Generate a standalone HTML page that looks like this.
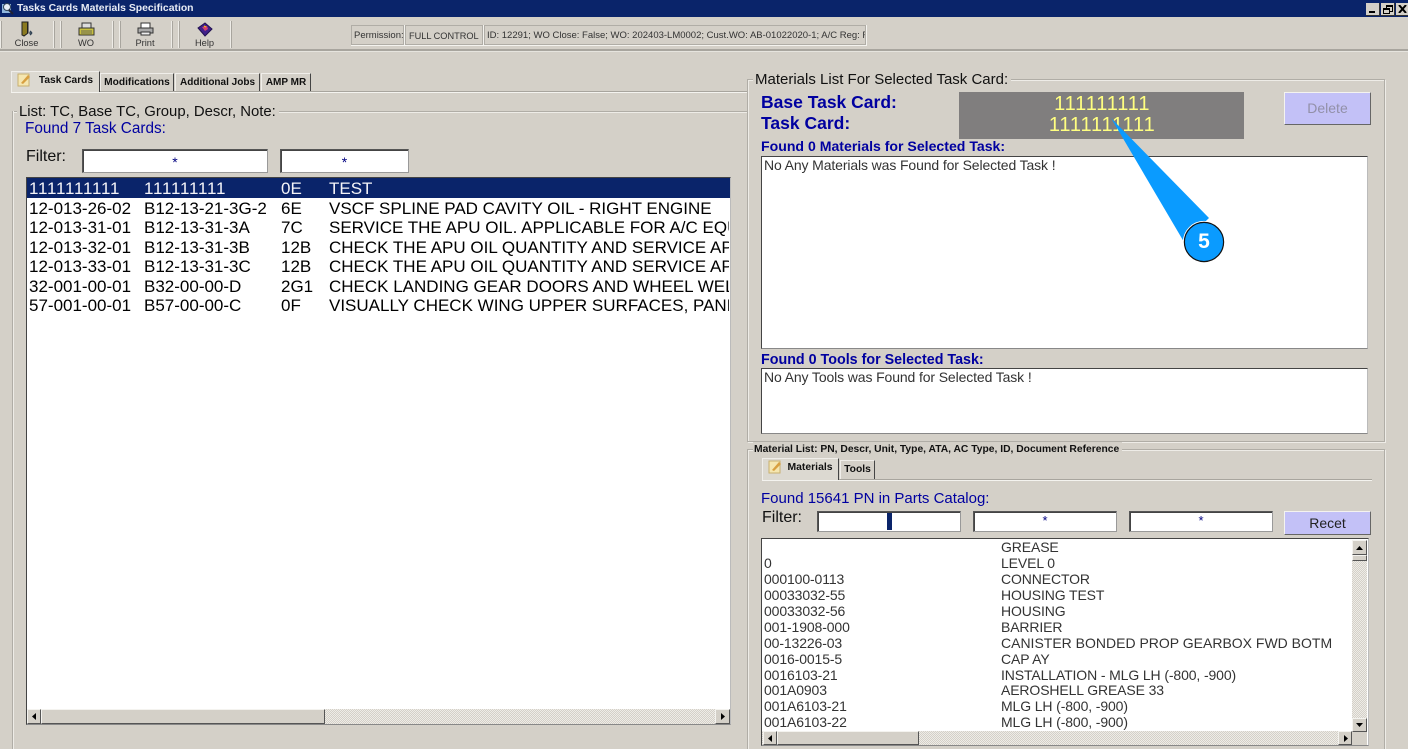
<!DOCTYPE html>
<html><head><meta charset="utf-8"><style>
html{margin:0;padding:0;width:1408px;height:749px;overflow:hidden}
body{margin:0;padding:0;width:1408px;height:749px;overflow:hidden;background:#d4d0c8;position:relative;font-family:"Liberation Sans",sans-serif;color:#000}
.a,.t,.c{position:absolute}
.t{white-space:pre;line-height:16px}
.c{white-space:pre;line-height:16px;text-align:center}
.gb{position:absolute;border:1px solid #b0ada6;box-shadow:1px 1px 0 #eeece7,inset 1px 1px 0 #eeece7}
.inp{position:absolute;background:#fff;border:1px solid #555;border-right-color:#999;border-bottom-color:#999;box-shadow:inset 1px 1px 0 #444;box-sizing:border-box;text-align:center;color:#000080;font-size:14px;line-height:25px}
.box{position:absolute;background:#fff;border:1px solid #444;border-right-color:#bbb;border-bottom-color:#888;box-sizing:border-box;overflow:hidden}
.sep{position:absolute;top:21px;width:1px;height:27px;background:#eeece7;border-right:1px solid #a8a59e}
.tab{position:absolute;border:1px solid #f0eeea;border-right:1px solid #444;border-bottom:none;box-sizing:border-box;font-weight:bold;font-size:10.5px;color:#111;text-align:center;white-space:pre}
.sb{position:absolute;background:#d4d0c8;border:1px solid #f4f3ef;border-right-color:#555;border-bottom-color:#555;box-sizing:border-box}
.dith{position:absolute;background-color:#eeece7;background-image:linear-gradient(45deg,#d4d0c8 25%,transparent 25%,transparent 75%,#d4d0c8 75%),linear-gradient(45deg,#d4d0c8 25%,transparent 25%,transparent 75%,#d4d0c8 75%);background-size:2px 2px;background-position:0 0,1px 1px}
.btn{position:absolute;background:#c3c1f7;border:1px solid #f4f3ef;border-right-color:#666;border-bottom-color:#666;box-sizing:border-box;text-align:center}
.r{font-size:17px;color:#000;line-height:20px}
.o{font-kerning:none;letter-spacing:-.45px}
.m{font-size:14px;color:#333;line-height:16px;letter-spacing:-.12px}
.st{position:absolute;top:25px;height:20px;background:#d4d0c8;border:1px solid #b0ada6;box-sizing:border-box;font-size:9.5px;line-height:20px;color:#333}
</style></head><body>

<!-- title bar -->
<div class="a" style="left:0;top:0;width:1408px;height:17px;background:#0a246a"></div>
<svg class="a" style="left:1px;top:1px" width="14" height="14" viewBox="0 0 14 14"><rect x="1" y="3" width="9" height="9" fill="#8fb6dd"/><circle cx="6" cy="6" r="3.5" fill="#e8eef5" stroke="#345" /><path d="M8 9l4 4" stroke="#223" stroke-width="2"/></svg>
<div class="t" style="left:17px;top:1px;color:#e8ecf5;font-size:10.4px;font-weight:bold">Tasks Cards Materials Specification</div>
<div class="a" style="left:1366px;top:3px;width:13px;height:12px;background:#d4d0c8;border-right:1px solid #333;border-bottom:1px solid #333"><div class="a" style="left:3px;bottom:2px;width:6px;height:2px;background:#000"></div></div>
<div class="a" style="left:1381px;top:3px;width:13px;height:12px;background:#d4d0c8;border-right:1px solid #333;border-bottom:1px solid #333"><div class="a" style="left:5px;top:2px;width:5px;height:4px;border:1px solid #000;border-top-width:2px"></div><div class="a" style="left:2px;top:5px;width:5px;height:3px;border:1px solid #000;border-top-width:2px;background:#d4d0c8"></div></div>
<div class="a" style="left:1396px;top:3px;width:12px;height:12px;background:#d4d0c8;border-bottom:1px solid #333"><svg class="a" style="left:2px;top:2px" width="9" height="8"><path d="M1 0l7 8M8 0l-7 8" stroke="#000" stroke-width="2"/></svg></div>

<!-- toolbar -->
<div class="a" style="left:0;top:17px;width:1408px;height:32px;border-bottom:2px solid #a8a59e;box-shadow:0 1px 0 #e6e4de"></div>
<div class="sep" style="left:0"></div><div class="sep" style="left:53px"></div><div class="sep" style="left:60px"></div>
<div class="sep" style="left:112px"></div><div class="sep" style="left:119px"></div><div class="sep" style="left:171px"></div><div class="sep" style="left:178px"></div><div class="sep" style="left:230px"></div>
<svg class="a" style="left:20px;top:21px" width="14" height="16" viewBox="0 0 14 16"><path d="M2 1h6v11l-4 3-2-1z" fill="#8a7a20" stroke="#222"/><path d="M7 1h1v11H7z" fill="#222"/><path d="M9 12h3M12 12l-2-2M12 12l-2 2" stroke="#345" stroke-width="1.3" fill="none"/></svg>
<svg class="a" style="left:78px;top:22px" width="17" height="14" viewBox="0 0 17 14"><rect x="4" y="1" width="9" height="6" fill="#ddd" stroke="#333"/><rect x="1" y="6" width="15" height="7" fill="#c8c040" stroke="#333"/><path d="M3 9h11M3 11h11" stroke="#665" /></svg>
<svg class="a" style="left:137px;top:22px" width="17" height="14" viewBox="0 0 17 14"><rect x="4" y="1" width="9" height="5" fill="#fff" stroke="#333"/><rect x="1" y="6" width="15" height="5" fill="#aaa" stroke="#333"/><rect x="4" y="10" width="9" height="3" fill="#eee" stroke="#333"/></svg>
<svg class="a" style="left:197px;top:22px" width="16" height="15" viewBox="0 0 16 15"><path d="M1 6l7-5 7 6-7 7z" fill="#40208a" stroke="#201050"/><path d="M5 5l5-1 1 3-3 2z" fill="#d04070"/><path d="M7 4l2 1" stroke="#fc0"/></svg>
<div class="c" style="left:0;top:36px;width:53px;font-size:9.3px;line-height:14px;color:#333">Close</div>
<div class="c" style="left:60px;top:36px;width:52px;font-size:9.3px;line-height:14px;color:#333">WO</div>
<div class="c" style="left:119px;top:36px;width:52px;font-size:9.3px;line-height:14px;color:#333">Print</div>
<div class="c" style="left:178px;top:36px;width:53px;font-size:9.3px;line-height:14px;color:#333">Help</div>

<div class="a" style="left:351px;top:25px;width:516px;height:21px;background:#f4f3ef"></div>
<div class="st" style="left:351px;width:53px;padding-left:2px;white-space:pre">Permission:</div>
<div class="st" style="left:405px;width:78px;padding-left:3px;font-size:9.2px;white-space:pre">FULL CONTROL</div>
<div class="st" style="left:484px;width:382px;padding-left:2px;overflow:hidden;white-space:pre">ID: 12291; WO Close: False; WO: 202403-LM0002; Cust.WO: AB-01022020-1; A/C Reg: RA-73030</div>

<!-- left tabs -->
<div class="a" style="left:11px;top:91px;width:736px;height:1px;background:#a8a59e;box-shadow:0 1px 0 #f4f3ef"></div>
<div class="tab" style="left:11px;top:71px;width:89px;height:21px;line-height:18px;padding-left:21px;background:#dcd9d1;font-size:10.2px">Task Cards</div>
<svg class="a" style="left:17px;top:73px" width="15" height="14" viewBox="0 0 15 14"><rect x="1" y="1" width="11" height="12" fill="#f5e6b0" stroke="#c8b070"/><path d="M4 10l7-8 2 2-7 7z" fill="#d8a040"/></svg>
<div class="tab" style="left:100px;top:73px;width:74px;height:18px;line-height:17px;font-size:10.2px">Modifications</div>
<div class="tab" style="left:175px;top:73px;width:85px;height:18px;line-height:17px;font-size:10px">Additional Jobs</div>
<div class="tab" style="left:261px;top:73px;width:50px;height:18px;line-height:17px;font-size:10px">AMP MR</div>

<!-- left group -->
<div class="a" style="left:12px;top:111px;width:735px;height:1px;background:#b0ada6;box-shadow:0 1px 0 #eeece7"></div>
<div class="a" style="left:12px;top:111px;width:1px;height:638px;background:#b0ada6;box-shadow:1px 0 0 #eeece7"></div>
<div class="t" style="left:17px;top:104px;padding:0 3px 0 2px;background:#d4d0c8;font-size:14.9px;color:#111">List: TC, Base TC, Group, Descr, Note:</div>
<div class="t" style="left:25px;top:121px;font-size:15.3px;color:#0000a0">Found 7 Task Cards:</div>
<div class="t" style="left:26px;top:149px;font-size:16px;color:#111">Filter:</div>
<div class="inp" style="left:82px;top:149px;width:186px;height:24px;">*</div>
<div class="inp" style="left:280px;top:149px;width:129px;height:24px;">*</div>

<div class="box" style="left:26px;top:177px;width:705px;height:548px"></div>
<div class="a" style="left:27px;top:178px;width:703px;height:20px;background:#0a246a"></div>
<div class="a" style="left:29px;top:179px;width:700px;height:530px;overflow:hidden">
<div class="t r o" style="left:0;top:0;color:#f4f4f8">1111111111</div><div class="t r o" style="left:115px;top:0;color:#f4f4f8">111111111</div><div class="t r" style="left:252px;top:0;color:#f4f4f8">0E</div><div class="t r" style="left:300px;top:0;color:#f4f4f8">TEST</div>
<div class="t r" style="left:0;top:20px">12-013-26-02</div><div class="t r" style="left:115px;top:20px">B12-13-21-3G-2</div><div class="t r" style="left:252px;top:20px">6E</div><div class="t r" style="left:300px;top:20px">VSCF SPLINE PAD CAVITY OIL - RIGHT ENGINE</div>
<div class="t r" style="left:0;top:39px">12-013-31-01</div><div class="t r" style="left:115px;top:39px">B12-13-31-3A</div><div class="t r" style="left:252px;top:39px">7C</div><div class="t r" style="left:300px;top:39px">SERVICE THE APU OIL. APPLICABLE FOR A/C EQUIPPED</div>
<div class="t r" style="left:0;top:59px">12-013-32-01</div><div class="t r" style="left:115px;top:59px">B12-13-31-3B</div><div class="t r" style="left:252px;top:59px">12B</div><div class="t r" style="left:300px;top:59px">CHECK THE APU OIL QUANTITY AND SERVICE APU OIL</div>
<div class="t r" style="left:0;top:78px">12-013-33-01</div><div class="t r" style="left:115px;top:78px">B12-13-31-3C</div><div class="t r" style="left:252px;top:78px">12B</div><div class="t r" style="left:300px;top:78px">CHECK THE APU OIL QUANTITY AND SERVICE APU OIL</div>
<div class="t r" style="left:0;top:98px">32-001-00-01</div><div class="t r" style="left:115px;top:98px">B32-00-00-D</div><div class="t r" style="left:252px;top:98px">2G1</div><div class="t r" style="left:300px;top:98px">CHECK LANDING GEAR DOORS AND WHEEL WELL</div>
<div class="t r" style="left:0;top:117px">57-001-00-01</div><div class="t r" style="left:115px;top:117px">B57-00-00-C</div><div class="t r" style="left:252px;top:117px">0F</div><div class="t r" style="left:300px;top:117px">VISUALLY CHECK WING UPPER SURFACES, PANELS</div>
</div>
<!-- left h scrollbar -->
<div class="dith" style="left:27px;top:709px;width:703px;height:15px"></div>
<div class="sb" style="left:27px;top:709px;width:14px;height:15px"><svg class="a" style="left:3px;top:3px" width="6" height="8"><path d="M5 0v7L1 3.5z" fill="#000"/></svg></div>
<div class="sb" style="left:41px;top:709px;width:284px;height:15px"></div>
<div class="sb" style="left:715px;top:709px;width:15px;height:15px"><svg class="a" style="left:4px;top:3px" width="6" height="8"><path d="M1 0v7l4-3.5z" fill="#000"/></svg></div>

<!-- right group 1 -->
<div class="gb" style="left:747px;top:79px;width:636px;height:361px"></div>
<div class="t" style="left:753px;top:72px;padding:0 3px 0 2px;background:#d4d0c8;font-size:15px;color:#111">Materials List For Selected Task Card:</div>
<div class="t" style="left:761px;top:94px;font-size:17.5px;font-weight:bold;color:#0000a0">Base Task Card:</div>
<div class="t" style="left:761px;top:115px;font-size:17.5px;font-weight:bold;color:#0000a0">Task Card:</div>
<div class="a" style="left:959px;top:92px;width:285px;height:47px;background:#807e7e"></div>
<div class="c" style="left:959px;top:96px;width:285px;font-size:20px;font-kerning:none;letter-spacing:-.6px;color:#ffff80">111111111</div>
<div class="c" style="left:959px;top:117px;width:285px;font-size:20px;font-kerning:none;letter-spacing:-.6px;color:#ffff80">1111111111</div>
<div class="btn" style="left:1284px;top:92px;width:87px;height:33px;font-size:14px;line-height:30px;color:#9290a8">Delete</div>
<div class="t" style="left:761px;top:138px;font-size:14.1px;font-weight:bold;color:#0000a0">Found 0 Materials for Selected Task:</div>
<div class="box" style="left:761px;top:156px;width:607px;height:193px"></div>
<div class="t m" style="left:764px;top:157px">No Any Materials was Found for Selected Task !</div>
<div class="t" style="left:761px;top:352px;font-size:14.3px;font-weight:bold;color:#0000a0">Found 0 Tools for Selected Task:</div>
<div class="box" style="left:761px;top:368px;width:607px;height:66px"></div>
<div class="t m" style="left:764px;top:369px">No Any Tools was Found for Selected Task !</div>

<!-- callout -->
<svg class="a" style="left:1105px;top:115px" width="125" height="150" viewBox="0 0 125 150"><path d="M6 3L104 103 79 127z" fill="#0a9bff"/><circle cx="99" cy="127" r="20.6" fill="none" stroke="#fff" stroke-width="1"/><circle cx="99" cy="127" r="19.6" fill="#0a9bff" stroke="#111" stroke-width="1.2"/></svg>
<div class="c" style="left:1184px;top:232px;width:40px;line-height:20px;font-size:21px;font-weight:bold;color:#fff">5</div>

<!-- right group 2 -->
<div class="gb" style="left:747px;top:449px;width:636px;height:310px"></div>
<div class="t" style="left:753px;top:442px;padding:0 3px 0 1px;background:#d4d0c8;font-size:10.3px;font-weight:bold;color:#111">Material List: PN, Descr, Unit, Type, ATA, AC Type, ID, Document Reference</div>
<div class="a" style="left:762px;top:479px;width:610px;height:1px;background:#a8a59e;box-shadow:0 1px 0 #f4f3ef"></div>
<div class="tab" style="left:762px;top:458px;width:77px;height:22px;line-height:18px;padding-left:19px;background:#dcd9d1;font-size:10.4px">Materials</div>
<svg class="a" style="left:768px;top:460px" width="15" height="14" viewBox="0 0 15 14"><rect x="1" y="1" width="11" height="12" fill="#f5e6b0" stroke="#c8b070"/><path d="M4 10l7-8 2 2-7 7z" fill="#d8a040"/></svg>
<div class="tab" style="left:840px;top:460px;width:35px;height:19px;line-height:18px;font-size:10.3px">Tools</div>
<div class="t" style="left:761px;top:491px;font-size:15px;color:#0000a0">Found 15641 PN in Parts Catalog:</div>
<div class="t" style="left:762px;top:510px;font-size:16px;color:#111">Filter:</div>
<div class="inp" style="left:817px;top:511px;width:144px;height:21px"></div>
<div class="a" style="left:887px;top:513px;width:5px;height:17px;background:#0a246a"></div>
<div class="inp" style="left:973px;top:511px;width:144px;height:21px;line-height:18px;font-size:13px">*</div>
<div class="inp" style="left:1129px;top:511px;width:144px;height:21px;line-height:18px;font-size:13px">*</div>
<div class="btn" style="left:1284px;top:511px;width:87px;height:24px;font-size:14px;line-height:22px;color:#222">Recet</div>

<div class="box" style="left:761px;top:538px;width:608px;height:208px"></div>
<div class="a" style="left:764px;top:539px;width:580px;height:192px;overflow:hidden">
<div class="t m" style="left:237px;top:0">GREASE</div>
<div class="t m" style="left:0;top:16px">0</div><div class="t m" style="left:237px;top:16px">LEVEL 0</div>
<div class="t m" style="left:0;top:32px">000100-0113</div><div class="t m" style="left:237px;top:32px">CONNECTOR</div>
<div class="t m" style="left:0;top:48px">00033032-55</div><div class="t m" style="left:237px;top:48px">HOUSING TEST</div>
<div class="t m" style="left:0;top:64px">00033032-56</div><div class="t m" style="left:237px;top:64px">HOUSING</div>
<div class="t m" style="left:0;top:80px">001-1908-000</div><div class="t m" style="left:237px;top:80px">BARRIER</div>
<div class="t m" style="left:0;top:96px">00-13226-03</div><div class="t m" style="left:237px;top:96px;letter-spacing:0">CANISTER BONDED PROP GEARBOX FWD BOTM</div>
<div class="t m" style="left:0;top:112px">0016-0015-5</div><div class="t m" style="left:237px;top:112px">CAP AY</div>
<div class="t m" style="left:0;top:128px">0016103-21</div><div class="t m" style="left:237px;top:128px">INSTALLATION - MLG LH (-800, -900)</div>
<div class="t m" style="left:0;top:143px">001A0903</div><div class="t m" style="left:237px;top:143px">AEROSHELL GREASE 33</div>
<div class="t m" style="left:0;top:159px">001A6103-21</div><div class="t m" style="left:237px;top:159px">MLG LH (-800, -900)</div>
<div class="t m" style="left:0;top:175px">001A6103-22</div><div class="t m" style="left:237px;top:175px">MLG LH (-800, -900)</div>
</div>
<!-- right scrollbars -->
<div class="dith" style="left:1352px;top:540px;width:15px;height:192px"></div>
<div class="sb" style="left:1352px;top:540px;width:15px;height:15px"><svg class="a" style="left:3px;top:4px" width="8" height="6"><path d="M0 5h7L3.5 1z" fill="#000"/></svg></div>
<div class="sb" style="left:1352px;top:555px;width:15px;height:6px"></div>
<div class="sb" style="left:1352px;top:718px;width:15px;height:14px"><svg class="a" style="left:3px;top:4px" width="8" height="6"><path d="M0 0h7L3.5 4z" fill="#000"/></svg></div>
<div class="dith" style="left:762px;top:731px;width:590px;height:14px"></div>
<div class="sb" style="left:763px;top:731px;width:14px;height:14px"><svg class="a" style="left:3px;top:3px" width="6" height="8"><path d="M5 0v7L1 3.5z" fill="#000"/></svg></div>
<div class="sb" style="left:777px;top:731px;width:142px;height:14px"></div>
<div class="sb" style="left:1338px;top:731px;width:14px;height:14px"><svg class="a" style="left:4px;top:3px" width="6" height="8"><path d="M1 0v7l4-3.5z" fill="#000"/></svg></div>
<div class="a" style="left:1352px;top:732px;width:15px;height:13px;background:#d4d0c8"></div>
</body></html>
